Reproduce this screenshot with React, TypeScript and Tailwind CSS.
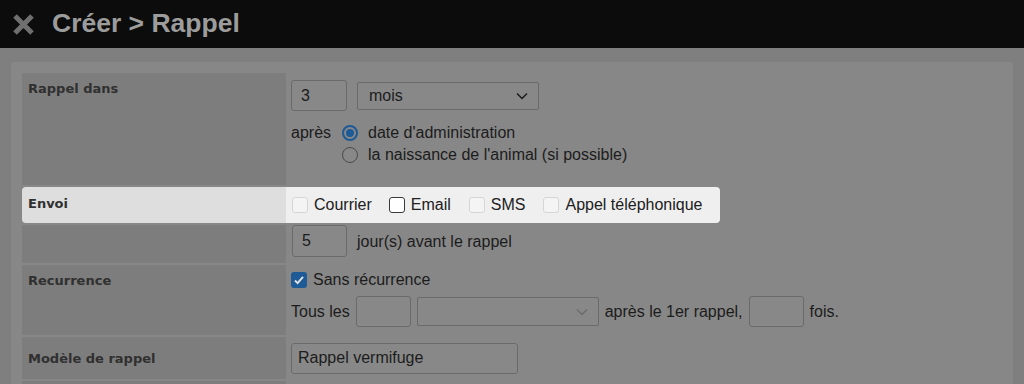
import React from "react";

const sans = { fontFamily: '"Liberation Sans", Arial, sans-serif' };
const label = { fontFamily: '"DejaVu Sans", Verdana, sans-serif' };

function DimInput({ value = "", className = "" }: { value?: string; className?: string }) {
  return (
    <div
      className={`flex items-center rounded-[3px] border border-[#6a6a6a] bg-[#888888] px-[9px] text-[16px] text-[#1c1c1c] ${className}`}
    >
      {value}
    </div>
  );
}

function DimSelect({ value = "", className = "" }: { value?: string; className?: string }) {
  return (
    <div
      className={`flex items-center justify-between rounded-[2px] border border-[#6a6a6a] bg-[#888888] pl-[11px] pr-[10px] text-[16px] text-[#1c1c1c] ${className}`}
    >
      <span>{value}</span>
      <svg width="12" height="8" viewBox="0 0 12 8" fill="none">
        <path
          d="M1 1.5l5 5 5-5"
          stroke={value ? "#1c1c1c" : "#6c6c6c"}
          strokeWidth="1.5"
        />
      </svg>
    </div>
  );
}

function Radio({ checked }: { checked?: boolean }) {
  return checked ? (
    <span className="flex h-[16px] w-[16px] items-center justify-center rounded-full border-[2px] border-[#1d5a96] bg-[#888888]">
      <span className="h-[8px] w-[8px] rounded-full bg-[#1d5a96]" />
    </span>
  ) : (
    <span className="h-[16px] w-[16px] rounded-full border border-[#4a4a4a] bg-[#888888]" />
  );
}

function Check({ dark }: { dark?: boolean }) {
  return dark ? (
    <span className="h-[16px] w-[16px] rounded-[3px] border border-[#3a3a3a] bg-white" />
  ) : (
    <span className="h-[16px] w-[16px] rounded-[3px] border border-[#d6d6d6] bg-[#f4f4f4]" />
  );
}

export default function App() {
  return (
    <div className="h-[384px] w-[1024px] overflow-hidden bg-[#7f7f7f]" style={sans}>
      <div className="flex h-[48px] items-center gap-[17px] bg-[#0c0c0c] pl-[12px]">
        <svg width="23" height="23" viewBox="0 0 23 23">
          <path d="M3 3l17 17M20 3L3 20" stroke="#6f6f6f" strokeWidth="5" />
        </svg>
        <span className="text-[26.5px] font-bold text-[#9c9c9c]">Créer &gt; Rappel</span>
      </div>

      <div className="px-[11px] pt-[14px]">
        <div className="flex flex-col gap-[2px] rounded-[2px] bg-[#878787] px-[11px] pt-[11px]">
          {/* Rappel dans */}
          <div className="flex h-[112px]">
            <div className="w-[264px] bg-[#7d7d7d] pl-[6px] pt-[6px] text-[13px] font-bold text-[#303030]" style={label}>
              Rappel dans
            </div>
            <div className="flex flex-col pl-[5px] pt-[7px] text-[16px] leading-[22px] text-[#1c1c1c]">
              <div className="flex items-center gap-[10px]">
                <DimInput value="3" className="h-[31px] w-[56px]" />
                <DimSelect value="mois" className="h-[28px] w-[182px]" />
              </div>
              <div className="mt-[11px] flex gap-[11px]">
                <span>après</span>
                <div className="flex flex-col">
                  <div className="flex items-center gap-[10px]">
                    <Radio checked />
                    <span>date d'administration</span>
                  </div>
                  <div className="flex items-center gap-[10px]">
                    <Radio />
                    <span>la naissance de l'animal (si possible)</span>
                  </div>
                </div>
              </div>
            </div>
          </div>

          {/* Envoi (highlighted) */}
          <div className="flex h-[36px]">
            <div className="flex w-[264px] items-center rounded-l-[4px] bg-[#dedede] pl-[6px] pb-[2px] text-[13px] font-bold text-[#303030]" style={label}>
              Envoi
            </div>
            <div className="flex w-[434px] items-center gap-[6px] rounded-r-[4px] bg-[#efefef] pl-[6px] pb-[1px] text-[16px] text-[#202020]">
              <Check />
              <span className="mr-[11px]">Courrier</span>
              <Check dark />
              <span className="mr-[12px]">Email</span>
              <Check />
              <span className="mr-[12px]">SMS</span>
              <Check />
              <span>Appel téléphonique</span>
            </div>
          </div>

          {/* Jours avant */}
          <div className="flex h-[38px]">
            <div className="w-[264px] bg-[#7d7d7d]" />
            <div className="flex items-start gap-[10px] pl-[6px] text-[16px] text-[#1c1c1c]">
              <DimInput value="5" className="h-[32px] w-[55px]" />
              <span className="mt-[5px]">jour(s) avant le rappel</span>
            </div>
          </div>

          {/* Recurrence */}
          <div className="flex h-[70px]">
            <div className="w-[264px] bg-[#7d7d7d] pl-[6px] pt-[6px] text-[13px] font-bold text-[#303030]" style={label}>
              Recurrence
            </div>
            <div className="flex flex-col pl-[5px] pt-[4px] text-[16px] leading-[22px] text-[#1c1c1c]">
              <div className="flex items-center gap-[6px]">
                <span className="flex h-[16px] w-[16px] items-center justify-center rounded-[3px] bg-[#1d5a96]">
                  <svg width="12" height="12" viewBox="0 0 12 12" fill="none">
                    <path d="M2 6.5l2.6 2.6L10 2.8" stroke="#e0e0e0" strokeWidth="2" />
                  </svg>
                </span>
                <span>Sans récurrence</span>
              </div>
              <div className="mt-[5px] flex items-center gap-[6px]">
                <span>Tous les</span>
                <DimInput className="h-[31px] w-[55px]" />
                <DimSelect className="h-[29px] w-[182px]" />
                <span>après le 1er rappel,</span>
                <DimInput className="h-[31px] w-[55px]" />
                <span>fois.</span>
              </div>
            </div>
          </div>

          {/* Modèle de rappel */}
          <div className="flex h-[42px]">
            <div className="flex w-[264px] items-center bg-[#7d7d7d] pl-[6px] pt-[2px] text-[13px] font-bold text-[#303030]" style={label}>
              Modèle de rappel
            </div>
            <div className="flex items-center pl-[5px]">
              <DimInput value="Rappel vermifuge" className="h-[31px] w-[227px] pl-[6px]" />
            </div>
          </div>

          <div className="flex h-[40px]">
            <div className="w-[264px] bg-[#7d7d7d]" />
          </div>
        </div>
      </div>
    </div>
  );
}
